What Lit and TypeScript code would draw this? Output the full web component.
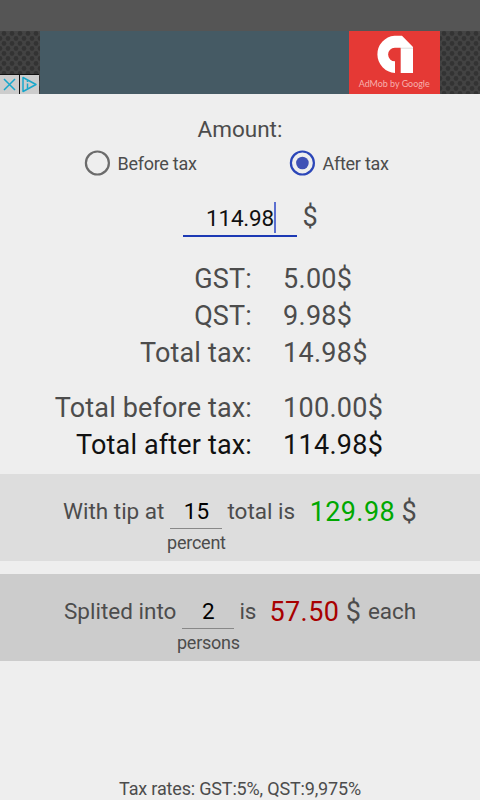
import { LitElement, html, css } from "lit";
import { customElement } from "lit/decorators.js";

@customElement("app-root")
export class AppRoot extends LitElement {
  static styles = css`
    :host { display: flex; flex-direction: column; width: 480px; height: 800px; overflow: hidden; background: #eee; color: #4c4c4c; font-family: Roboto, sans-serif; font-size: 27px; white-space: pre; }
    .status { height: 31px; background: #555; flex: none; }
    .ad { height: 63px; flex: none; display: flex; position: relative; }
    .mesh { width: 40px; height: 63px; display: block; }
    .slate { width: 309px; background: #455a64; }
    .brand { width: 91px; background: #e53935; }
    .brand svg { display: block; font-family: Lato, sans-serif; }
    .choices { position: absolute; left: 0; bottom: 0; }
    .amount { display: flex; justify-content: center; height: 30px; line-height: 30px; margin-top: 20px; font-size: 22.5px; }
    .radios { display: flex; height: 26px; margin-top: 6px; line-height: 28px; font-size: 18px; letter-spacing: -0.27px; }
    .radio { display: flex; width: 205px; flex: none; }
    .radio:first-child { margin-left: 84px; }
    .radio svg { margin-right: 7.5px; }
    .entry { display: flex; margin: 26px 0 0 183px; height: 35px; }
    .field { box-sizing: border-box; width: 114px; height: 35px; border-bottom: 2px solid #1c39b4; display: flex; justify-content: flex-end; padding-right: 21px; font-size: 22.5px; line-height: 33px; color: #111; }
    .field span:first-child { letter-spacing: -0.2px; }
    .caret { width: 2px; height: 31px; background: #5b6fd0; }
    .cur { margin-left: 5.5px; line-height: 31px; }
    .table { display: grid; grid-template-columns: 252px 1fr; column-gap: 31px; grid-auto-rows: 37px; line-height: 38px; margin-top: 23px; letter-spacing: 0.15px; }
    .table.sums { margin-top: 19px; line-height: 37px; }
    .v { letter-spacing: 0.3px; }
    .l { text-align: right; }
    .strong { color: #111; }
    .band { box-sizing: border-box; height: 87px; display: flex; font-size: 22.5px; line-height: 30px; padding-top: 22px; flex: none; }
    .tip { background: #ddd; margin-top: 10px; padding-left: 63px; }
    .split { background: #ccc; margin-top: 13px; padding-left: 64px; }
    .box { width: 52px; display: flex; flex-direction: column; align-items: center; margin: 0 5px 0 6px; }
    .val { width: 52px; height: 32px; text-align: center; color: #000; border-bottom: 1px solid #888; }
    .unit { font-size: 18px; line-height: 27px; letter-spacing: -0.25px; }
    .big { font-size: 27px; line-height: 32px; letter-spacing: 0.4px; }
    .green { color: #00a800; margin: 0 6.5px 0 14.5px; }
    .red { color: #a80000; margin: 0 6.5px 0 13px; }
    .each { margin-left: 6.5px; }
    .foot { margin-top: auto; text-align: center; font-size: 18px; line-height: 22px; height: 22px; letter-spacing: -0.17px; flex: none; }
  `;

  mesh(id: string) {
    return html`<svg class="mesh" width="40" height="63">
      <defs><pattern id=${id} width="8" height="10" patternUnits="userSpaceOnUse">
        <rect width="8" height="10" fill="#434343"/>
        <circle cx="4" cy="2.5" r="2.4" fill="#333"/><circle cx="0" cy="7.5" r="2.4" fill="#333"/><circle cx="8" cy="7.5" r="2.4" fill="#333"/>
      </pattern></defs><rect width="40" height="63" fill="url(#${id})"/></svg>`;
  }

  brand() {
    return html`<div class="brand"><svg width="91" height="63">
      <path fill="#fff" d="M46 42A18.7 18.7 0 0 1 45.5 4.7H53L64 16V42H51.7V16.7H45.8A6.8 6.8 0 0 0 46 30.3Z"/>
      <path d="M52 17.2H64" stroke="#ddd"/>
      <text x="9.7" y="55.5" font-size="9.8" fill="#f7b0ad" textLength="71" lengthAdjust="spacingAndGlyphs">AdMob by Google</text>
    </svg></div>`;
  }

  choices() {
    return html`<svg class="choices" width="40" height="20">
      <rect width="39" height="20" fill="#111"/>
      <rect y="1" width="19" height="19" fill="#ccc"/><rect x="20" y="1" width="19" height="19" fill="#ccc"/>
      <g fill="none" stroke="#18a7cb" stroke-width="1.5"><path d="M4 5L15 16M15 5L4 16"/>
      <path d="M23 3.5L36 10.5L23 17.5Z" stroke-linejoin="round"/><path d="M27.5 9.5V14.5M27.5 6.5V8"/></g></svg>`;
  }

  radio(label: string, on: boolean) {
    const c = on ? "#2b46b8" : "#6b6b6b";
    return html`<div class="radio"><svg width="26" height="26">
      <circle cx="13.4" cy="13" r="11.5" fill="none" stroke=${c} stroke-width="2.2"/>
      <circle cx="13.4" cy="13" r="6.3" fill=${on ? "#3f51b5" : "none"}/></svg><span>${label}</span></div>`;
  }

  row(label: string, value: string, cls = "") {
    return html`<span class="l ${cls}">${label}</span><span class="v ${cls}">${value}</span>`;
  }

  render() {
    return html`
      <div class="status"></div>
      <div class="ad">${this.mesh("mesh-left")}<div class="slate"></div>${this.brand()}${this.mesh("mesh-right")}${this.choices()}</div>
      <div class="amount"><span>Amount:</span></div>
      <div class="radios">${this.radio("Before tax", false)}${this.radio("After tax", true)}</div>
      <div class="entry"><div class="field"><span>114.98</span><span class="caret"></span></div><span class="cur">$</span></div>
      <div class="table">${this.row("GST:", "5.00$")}${this.row("QST:", "9.98$")}${this.row("Total tax:", "14.98$")}</div>
      <div class="table sums">${this.row("Total before tax:", "100.00$")}${this.row("Total after tax:", "114.98$", "strong")}</div>
      <div class="band tip"><span>With tip at</span><div class="box"><div class="val">15</div><span class="unit">percent</span></div><span>total is</span><span class="big green">129.98</span><span class="big">$</span></div>
      <div class="band split"><span>Splited into</span><div class="box"><div class="val">2</div><span class="unit">persons</span></div><span>is</span><span class="big red">57.50</span><span class="big">$</span><span class="each">each</span></div>
      <div class="foot">Tax rates: GST:5%, QST:9,975%</div>`;
  }
}
